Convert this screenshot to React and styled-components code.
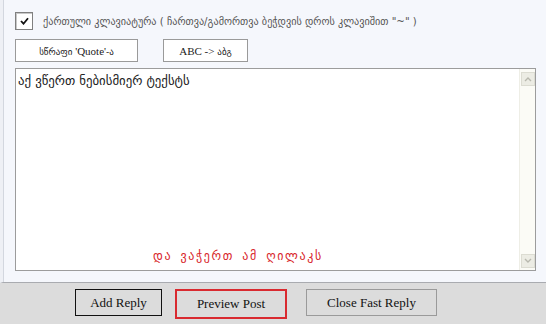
import styled, { createGlobalStyle } from "styled-components";

const Global = createGlobalStyle`
  html, body { margin: 0; padding: 0; }
  body {
    background: #dcdcdc;
    width: 546px;
    height: 324px;
    overflow: hidden;
    font-family: "DejaVu Sans", sans-serif;
  }
`;

const Page = styled.div`
  width: 546px;
  height: 324px;
  display: flex;
  flex-direction: column;
`;

const Panel = styled.div`
  height: 283px;
  box-sizing: border-box;
  background: #f5f7fc;
  border-left: 3px solid #eef0f5;
  border-bottom: 1px solid #a9abb0;
  position: relative;
  display: flex;
  flex-direction: column;
  padding: 12px 10px 0 11px;
  &::before {
    content: "";
    position: absolute;
    left: 0;
    top: 0;
    bottom: 0;
    width: 1px;
    background: #d3d7df;
  }
`;

const KeyboardRow = styled.div`
  display: flex;
  align-items: center;
  gap: 10px;
  height: 18px;
  font-size: 10.2px;
  color: #555;
  padding-left: 1px;
`;

const Box = styled.div`
  flex: none;
  width: 18px;
  height: 18px;
  box-sizing: border-box;
  border: 1px solid #808080;
  box-shadow: inset 1px 1px 0 #c8c8c8;
  background: #ffffff;
  display: grid;
  place-items: center;
`;

const ToolRow = styled.div`
  display: flex;
  gap: 25px;
  margin-top: 9px;
  padding-left: 1px;
`;

const ToolButton = styled.button`
  width: ${(p) => p.w}px;
  height: 23px;
  box-sizing: border-box;
  background: #fff;
  border: 1px solid #9a9a9a;
  font-family: "DejaVu Sans", "Liberation Serif", serif;
  font-size: 9px;
  color: #222;
  padding: 0;
`;

const Serif = styled.span`
  font-family: "Liberation Serif", serif;
  font-size: 11px;
`;

const Editor = styled.div`
  margin-top: 6px;
  margin-left: 1px;
  width: 521px;
  height: 203px;
  box-sizing: border-box;
  background: #fff;
  border: 1px solid #9c9c9c;
  display: flex;
`;

const EditorText = styled.div`
  flex: 1;
  display: flex;
  flex-direction: column;
  justify-content: space-between;
  padding: 4px 2px 7px 2px;
  font-size: 12.8px;
  color: #222;
`;

const Note = styled.div`
  align-self: flex-start;
  margin-left: 135px;
  font-size: 12px;
  letter-spacing: 1.6px;
  word-spacing: 3px;
  color: #d8262b;
`;

const Scrollbar = styled.div`
  width: 16px;
  box-sizing: border-box;
  border-left: 1px solid #eeeee6;
  background: #fbfbf6;
  display: flex;
  flex-direction: column;
  justify-content: space-between;
  padding: 3px 0 2px 1px;
`;

const Arrow = styled.div`
  width: 14px;
  height: 14px;
  box-sizing: border-box;
  background: #ecece4;
  border: 1px solid #dcdcd2;
  display: flex;
  align-items: center;
  justify-content: center;
`;

const Footer = styled.div`
  flex: 1;
  display: flex;
  align-items: flex-start;
  padding: 6px 0 0 75px;
`;

const FootButton = styled.button`
  width: ${(p) => p.w}px;
  height: ${(p) => p.h || 27}px;
  margin-right: ${(p) => p.gap || 0}px;
  box-sizing: border-box;
  background: #dcdcdc;
  border: ${(p) => p.border};
  font-family: "Liberation Serif", serif;
  font-size: 13px;
  color: #111;
  padding: 0;
`;

const Chevron = ({ up }) => (
  <svg width="8" height="6" viewBox="0 0 8 6">
    <path
      d={up ? "M1 5 L4 2 L7 5" : "M1 1 L4 4 L7 1"}
      fill="none"
      stroke="#b8b8ae"
      strokeWidth="1.4"
    />
  </svg>
);

export default function App() {
  return (
    <Page>
      <Global />
      <Panel>
        <KeyboardRow>
          <Box>
            <svg width="9" height="8" viewBox="0 0 9 8">
              <path d="M1 4 L3.5 6.7 L8 1.2" fill="none" stroke="#111" strokeWidth="1.8" />
            </svg>
          </Box>
          ქართული კლავიატურა ( ჩართვა/გამორთვა ბეჭდვის დროს კლავიშით "~" )
        </KeyboardRow>
        <ToolRow>
          <ToolButton w={123}>
            სწრაფი <Serif>'Quote'</Serif>-ა
          </ToolButton>
          <ToolButton w={85}>
            <Serif>ABC -&gt;</Serif> აბგ
          </ToolButton>
        </ToolRow>
        <Editor>
          <EditorText>
            <div>აქ ვწერთ ნებისმიერ ტექსტს</div>
            <Note>და ვაჭერთ ამ ღილაკს</Note>
          </EditorText>
          <Scrollbar>
            <Arrow>
              <Chevron up />
            </Arrow>
            <Arrow>
              <Chevron />
            </Arrow>
          </Scrollbar>
        </Editor>
      </Panel>
      <Footer>
        <FootButton w={87} gap={13} border="1px solid #111" h={27}>
          Add Reply
        </FootButton>
        <FootButton w={112} gap={19} border="2px solid #d92a30" h={30}>
          Preview Post
        </FootButton>
        <FootButton w={131} border="1px solid #9a9a9a">
          Close Fast Reply
        </FootButton>
      </Footer>
    </Page>
  );
}
